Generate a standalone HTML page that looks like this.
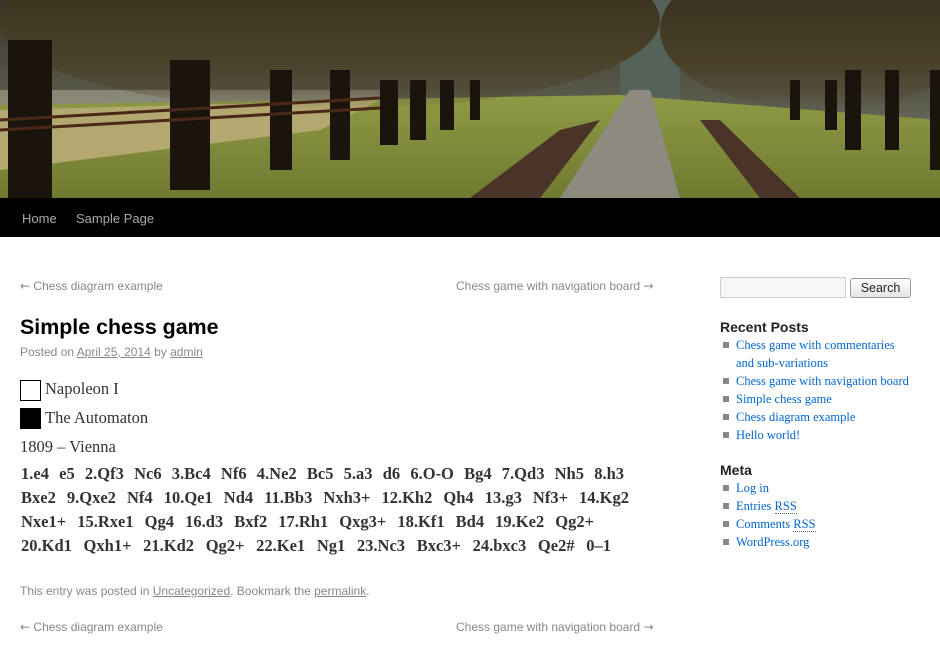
<!DOCTYPE html>
<html><head><meta charset="utf-8">
<style>
*{margin:0;padding:0;box-sizing:border-box}
body{width:940px;height:660px;overflow:hidden;background:#fff;font-family:"Liberation Sans",sans-serif;position:relative}
.hdr{position:absolute;left:0;top:0;width:940px;height:198px}
.nav{position:absolute;left:0;top:198px;width:940px;height:39px;background:#000}
.nav span{position:absolute;top:13px;color:#aaa;font-size:13px}
.a{position:absolute;white-space:nowrap}
.pn{font-size:12px;color:#888}
h1{position:absolute;left:20px;top:315px;font-size:21.4px;font-weight:bold;color:#000}
.meta{font-size:12px;color:#888}
.meta u{color:#888}
.serif{font-family:"Liberation Serif",serif;color:#333}
.box{position:absolute;left:20px;width:21px;height:21px;border:1px solid #000}
.mv{position:absolute;left:21px;font-family:"Liberation Serif",serif;font-weight:bold;font-size:16.5px;color:#333;text-align:justify;text-align-last:justify;white-space:nowrap}
.side h3{font-size:14px;font-weight:bold;color:#222}
.side ul{list-style:none}
.side li{font-family:"Liberation Serif",serif;font-size:12.5px;color:#0066cc;line-height:18px;padding-left:16px;position:relative}
.side li:before{content:"";position:absolute;left:3px;top:6px;width:6px;height:6px;background:#888}
</style></head><body>
<svg class="hdr" viewBox="0 0 940 198" width="940" height="198">
<defs>
<linearGradient id="sky" x1="0" y1="0" x2="0" y2="1"><stop offset="0" stop-color="#3a3526"/><stop offset="0.5" stop-color="#5a5a4c"/><stop offset="1" stop-color="#8f9180"/></linearGradient>
<linearGradient id="grass" x1="0" y1="0" x2="0" y2="1"><stop offset="0" stop-color="#8f9a45"/><stop offset="1" stop-color="#6f7a30"/></linearGradient>
<linearGradient id="fol" x1="0" y1="0" x2="0" y2="1"><stop offset="0" stop-color="#2e2818"/><stop offset="0.7" stop-color="#4a4028"/><stop offset="1" stop-color="#4a4028" stop-opacity="0"/></linearGradient>
</defs>
<rect width="940" height="198" fill="url(#sky)"/>
<rect x="0" y="90" width="380" height="90" fill="#a8a694" opacity="0.6"/>
<rect x="620" y="0" width="60" height="150" fill="#55625a"/>
<polygon points="0,105 620,95 940,120 940,198 0,198" fill="url(#grass)"/>
<polygon points="0,110 380,100 320,130 0,170" fill="#b3a870"/>
<polygon points="630,90 650,90 680,198 560,198" fill="#8d8a80"/>
<polygon points="600,120 540,198 470,198 560,130" fill="#4a3428"/>
<polygon points="700,120 760,198 800,198 720,120" fill="#4a3428"/>
<ellipse cx="330" cy="20" rx="330" ry="90" fill="url(#fol)"/>
<ellipse cx="820" cy="30" rx="160" ry="80" fill="url(#fol)"/>
<g fill="#1a140c">
<rect x="8" y="40" width="44" height="158"/><rect x="170" y="60" width="40" height="130"/><rect x="270" y="70" width="22" height="100"/><rect x="330" y="70" width="20" height="90"/><rect x="380" y="80" width="18" height="65"/><rect x="410" y="80" width="16" height="60"/><rect x="440" y="80" width="14" height="50"/><rect x="470" y="80" width="10" height="40"/>
<rect x="845" y="70" width="16" height="80"/><rect x="885" y="70" width="14" height="80"/><rect x="825" y="80" width="12" height="50"/><rect x="790" y="80" width="10" height="40"/><rect x="930" y="70" width="10" height="100"/>
</g>
<g stroke="#4a2818" stroke-width="3"><line x1="0" y1="120" x2="380" y2="98"/><line x1="0" y1="130" x2="380" y2="108"/></g>
</svg>
<div class="nav"><span style="left:22px">Home</span><span style="left:76px">Sample Page</span></div>

<div class="a pn" style="left:20px;top:279px"><span style="font-family:'DejaVu Sans'">←</span> Chess diagram example</div>
<div class="a pn" style="left:456px;top:279px">Chess game with navigation board <span style="font-family:'DejaVu Sans'">→</span></div>
<h1>Simple chess game</h1>
<div class="a meta" style="left:20px;top:345px">Posted on <u>April 25, 2014</u> by <u>admin</u></div>
<div class="box" style="top:380px"></div>
<div class="a serif" style="left:45px;top:379px;font-size:16.5px">Napoleon I</div>
<div class="box" style="top:408px;background:#000"></div>
<div class="a serif" style="left:45px;top:408px;font-size:16.5px">The Automaton</div>
<div class="a serif" style="left:20px;top:437px;font-size:16.5px">1809 – Vienna</div>
<div class="mv" style="top:464px;width:603px">1.e4 e5 2.Qf3 Nc6 3.Bc4 Nf6 4.Ne2 Bc5 5.a3 d6 6.O-O Bg4 7.Qd3 Nh5 8.h3</div>
<div class="mv" style="top:488px;width:608px">Bxe2 9.Qxe2 Nf4 10.Qe1 Nd4 11.Bb3 Nxh3+ 12.Kh2 Qh4 13.g3 Nf3+ 14.Kg2</div>
<div class="mv" style="top:512px;width:573px">Nxe1+ 15.Rxe1 Qg4 16.d3 Bxf2 17.Rh1 Qxg3+ 18.Kf1 Bd4 19.Ke2 Qg2+</div>
<div class="mv" style="top:536px;width:590px">20.Kd1 Qxh1+ 21.Kd2 Qg2+ 22.Ke1 Ng1 23.Nc3 Bxc3+ 24.bxc3 Qe2# 0–1</div>
<div class="a meta" style="left:20px;top:584px">This entry was posted in <u>Uncategorized</u>. Bookmark the <u>permalink</u>.</div>
<div class="a pn" style="left:20px;top:620px"><span style="font-family:'DejaVu Sans'">←</span> Chess diagram example</div>
<div class="a pn" style="left:456px;top:620px">Chess game with navigation board <span style="font-family:'DejaVu Sans'">→</span></div>

<div class="a" style="left:720px;top:277px;width:126px;height:21px;border:1px solid #ccc;background:#f7f7f7"></div>
<div class="a" style="left:850px;top:278px;width:61px;height:20px;border:1px solid #999;border-radius:3px;background:linear-gradient(#fff,#e4e4e4);font-size:12.5px;color:#222;text-align:center;line-height:18px">Search</div>
<div class="a side" style="left:720px;top:319px">
<h3>Recent Posts</h3>
<ul style="margin-top:1px">
<li>Chess game with commentaries<br>and sub-variations</li>
<li>Chess game with navigation board</li>
<li>Simple chess game</li>
<li>Chess diagram example</li>
<li>Hello world!</li>
</ul>
<h3 style="margin-top:18px">Meta</h3>
<ul style="margin-top:1px">
<li>Log in</li>
<li>Entries <span style="border-bottom:1px dotted #666">RSS</span></li>
<li>Comments <span style="border-bottom:1px dotted #666">RSS</span></li>
<li>WordPress.org</li>
</ul>
</div>
</body></html>
